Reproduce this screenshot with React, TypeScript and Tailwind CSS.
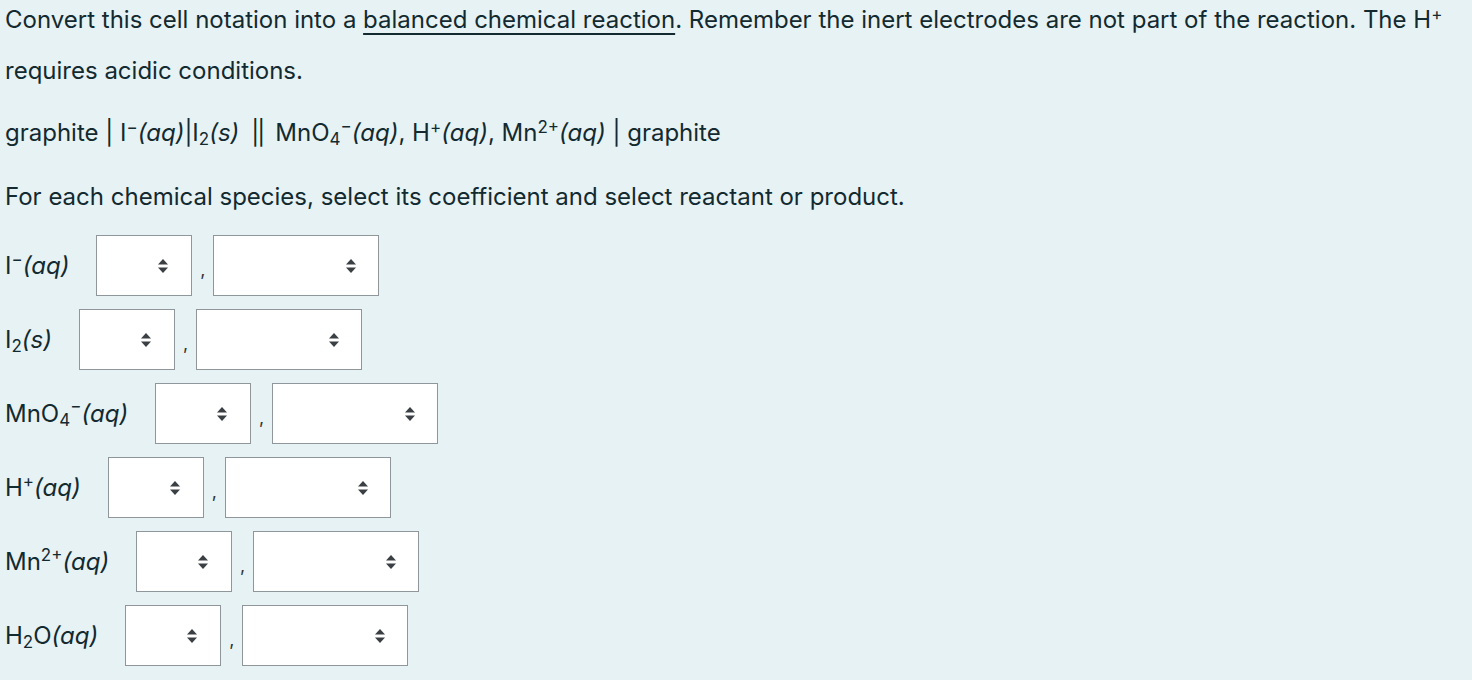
import React from 'react';

const font = { fontFamily: 'Inter, "Noto Sans", sans-serif' };

function Flechas() {
  return (
    <svg width="10" height="14" viewBox="0 0 10 14" className="text-[#3a3f44]">
      <path d="M5 0 L10 5.5 L0 5.5 Z" fill="currentColor" />
      <path d="M5 14 L10 8.5 L0 8.5 Z" fill="currentColor" />
    </svg>
  );
}

function Caixa({ largura, direita }: { largura: string; direita: string }) {
  return (
    <div className={`${largura} h-[61px] bg-white border border-[#8f979c] flex items-center justify-end ${direita}`}>
      <Flechas />
    </div>
  );
}

const sup = 'text-[17px] leading-none';
const sub = 'text-[17px] leading-none';

const especies: { id: string; rotulo: React.ReactNode }[] = [
  { id: 'i', rotulo: <>I<sup className={sup}>−</sup><i>(aq)</i></> },
  { id: 'i2', rotulo: <>I<sub className={sub}>2</sub><i>(s)</i></> },
  { id: 'mno4', rotulo: <>MnO<sub className={sub}>4</sub><sup className={sup}>−</sup><i>(aq)</i></> },
  { id: 'h', rotulo: <>H<sup className={sup}>+</sup><i>(aq)</i></> },
  { id: 'mn', rotulo: <>Mn<sup className={sup}>2+</sup><i>(aq)</i></> },
  { id: 'h2o', rotulo: <>H<sub className={sub}>2</sub>O<i>(aq)</i></> },
];

export default function App() {
  return (
    <div className="min-h-screen bg-[#e7f2f5] text-[#122a30] text-[24px] px-[5px]" style={font}>
      {/* Enunciado */}
      <p className="leading-[51px] -mt-[6px]">
        Convert this cell notation into a{' '}
        <span className="underline underline-offset-[5px] decoration-[1.5px]">balanced chemical reaction</span>. Remember the
        inert electrodes are not part of the reaction. The H<sup className={sup}>+</sup> requires acidic conditions.
      </p>

      {/* Notação da pilha */}
      <p className="leading-[38px] mt-[18px] whitespace-nowrap">
        graphite | I<sup className={sup}>−</sup><i>(aq)</i>|I<sub className={sub}>2</sub><i>(s)</i>
        <span className="mx-[12px] tracking-[-2px]">||</span>
        MnO<sub className={sub}>4</sub><sup className={sup}>−</sup><i>(aq)</i>, H<sup className={sup}>+</sup><i>(aq)</i>, Mn<sup className={sup}>2+</sup><i>(aq)</i> | graphite
      </p>

      <p className="leading-[38px] mt-[26px]">For each chemical species, select its coefficient and select reactant or product.</p>

      {/* Linhas de seleção */}
      <div className="mt-[19px] flex flex-col gap-[13px]">
        {especies.map((e) => (
          <div key={e.id} className="flex items-center h-[61px]">
            <span className="mr-[27px] whitespace-nowrap">{e.rotulo}</span>
            <Caixa largura="w-[96px]" direita="pr-[23px]" />
            <span className="w-[21px] text-center text-[18px] text-[#333] pt-[8px]">,</span>
            <Caixa largura="w-[166px]" direita="pr-[22px]" />
          </div>
        ))}
      </div>
    </div>
  );
}
